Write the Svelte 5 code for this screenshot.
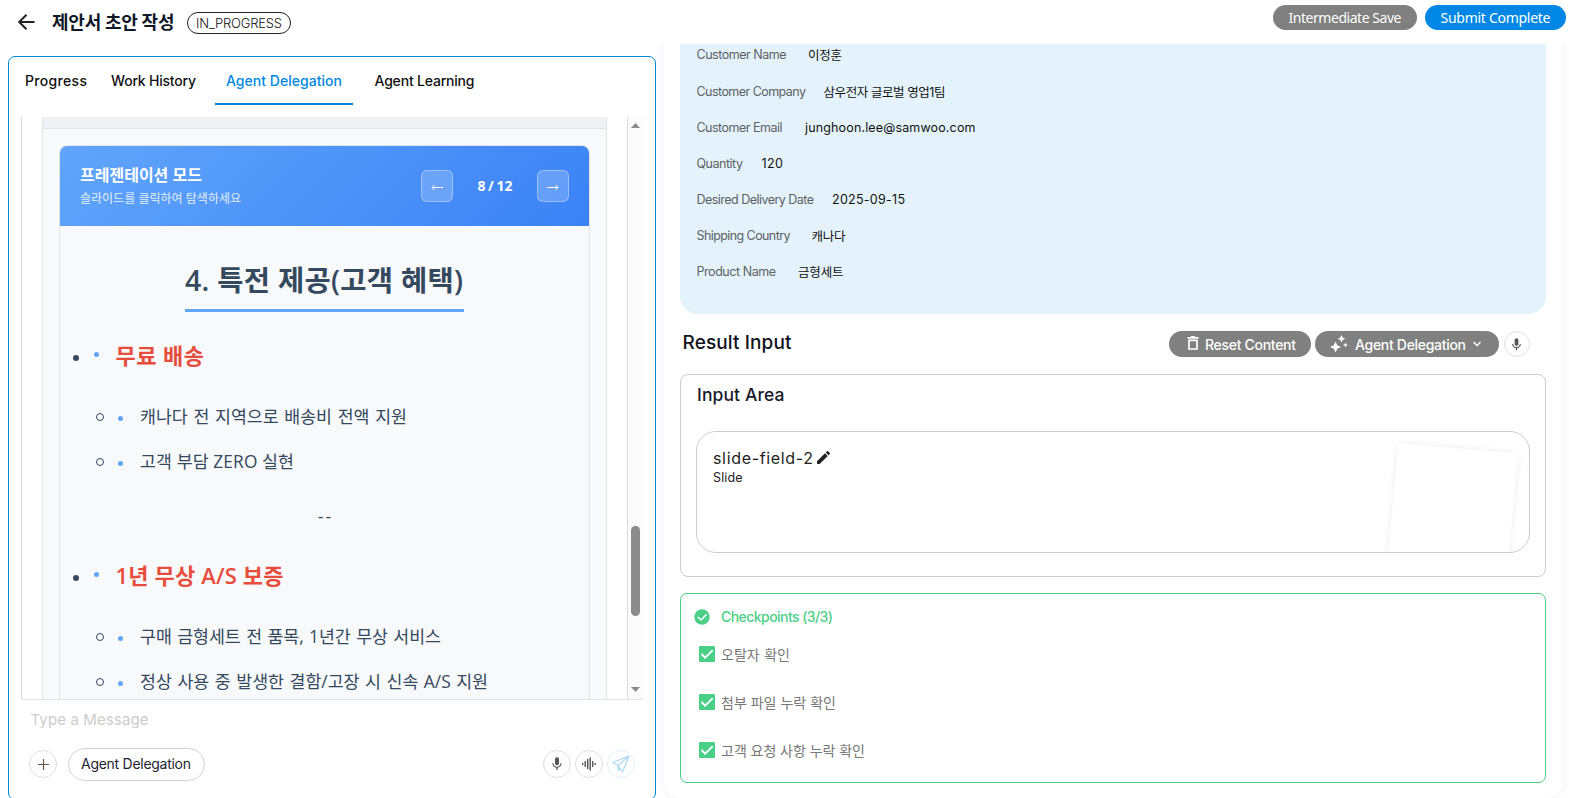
<script>
  const fields = [
    ['Customer Name', 90, 21.5, '이정훈', 34],
    ['Customer Company', 109.5, 17.5, '삼우전자 글로벌 영업1팀', 122],
    ['Customer Email', 86, 22.5, 'junghoon.lee@samwoo.com', 170.5],
    ['Quantity', 46.5, 18.5, '120', 21.5],
    ['Desired Delivery Date', 117.5, 18, '2025-09-15', 73],
    ['Shipping Country', 94, 21, '캐나다', 34],
    ['Product Name', 79.5, 22, '금형세트', 45.5]
  ];
  const tabs = [
    ['Progress', 62],
    ['Work History', 85],
    ['Agent Delegation', 116],
    ['Agent Learning', 100]
  ];
  const checks = [
    ['오탈자 확인', 69],
    ['첨부 파일 누락 확인', 115],
    ['고객 요청 사항 누락 확인', 144]
  ];

  // Spreads a single line of text over a given width, between letters or between words.
  function fit(node, [width, mode]) {
    node.style.whiteSpace = 'nowrap';
    const range = document.createRange();
    range.selectNodeContents(node);
    const natural = range.getBoundingClientRect().width;
    const text = node.textContent.trim();
    if (mode === 'word') {
      node.style.wordSpacing = (width - natural) / (text.split(' ').length - 1) + 'px';
    } else {
      const gap = (width - natural) / (text.length - 1);
      node.style.letterSpacing = gap + 'px';
      node.style.marginRight = -gap + 'px';
    }
  }
</script>

{#snippet mic(size)}
  <svg width={size} height={size} viewBox="0 0 24 24" fill="#555">
    <path d="M12 14c1.7 0 3-1.3 3-3V5c0-1.7-1.300-3-3-3S9 3.300 9 5v6c0 1.700 1.300 3 3 3z" />
    <path d="M17.300 11c0 3-2.500 5.100-5.300 5.100S6.700 14 6.700 11H5c0 3.400 2.700 6.200 6 6.700V21h2v-3.300c3.300-.5 6-3.300 6-6.700h-1.700z" />
  </svg>
{/snippet}

<div class="app">
  <header>
    <svg class="back" width="24" height="24" viewBox="0 0 24 24" fill="none" stroke="#222" stroke-width="2">
      <path d="M20.500 12H5.500M12.500 4.700L5.200 12l7.300 7.300" />
    </svg>
    <h1><span use:fit={[122.500]}>제안서 초안 작성</span></h1>
    <div class="status"><span use:fit={[86]}>IN_PROGRESS</span></div>
    <div class="actions">
      <button class="save"><span use:fit={[113]}>Intermediate Save</span></button>
      <button class="submit"><span use:fit={[110]}>Submit Complete</span></button>
    </div>
  </header>

  <main>
    <section class="chat">
      <nav>
        {#each tabs as [name, w], i}
          <div class="tab" class:active={i === 2}><span use:fit={[w]}>{name}</span></div>
        {/each}
      </nav>

      <div class="scroller">
        <div class="message">
          <div class="deck">
            <div class="strip"></div>
            <div class="slide">
              <div class="slidehead">
                <div>
                  <div class="mode"><span use:fit={[122, 'word']}>프레젠테이션 모드</span></div>
                  <div class="hint"><span use:fit={[161, 'word']}>슬라이드를 클릭하여 탐색하세요</span></div>
                </div>
                <div class="pager">
                  <div class="arrow">
                    <svg width="12" height="7" viewBox="0 0 12 7" fill="none" stroke="#fff"><path d="M12 3.500H1M3.500 1L1 3.500L3.500 6" /></svg>
                  </div>
                  <b><span use:fit={[35, 'word']}>8 / 12</span></b>
                  <div class="arrow">
                    <svg width="12" height="7" viewBox="0 0 12 7" fill="none" stroke="#fff"><path d="M0 3.500H11M8.500 1L11 3.500L8.500 6" /></svg>
                  </div>
                </div>
              </div>
              <h2><span use:fit={[278]}><i>4.</i> 특전 제공<i>(</i>고객 혜택<i>)</i></span></h2>
              <div class="topic"><em></em><u></u><span use:fit={[88.5]}>무료 배송</span></div>
              <div class="item"><em></em><u></u><span use:fit={[267, 'word']}>캐나다 전 지역으로 배송비 전액 지원</span></div>
              <div class="item"><em></em><u></u><span use:fit={[154]}>고객 부담 ZERO 실현</span></div>
              <p><span use:fit={[13.500]}>--</span></p>
              <div class="topic"><em></em><u></u><span use:fit={[168]}><i>1</i>년 무상 <i>A/S</i> 보증</span></div>
              <div class="item"><em></em><u></u><span use:fit={[301, 'word']}>구매 금형세트 전 품목, 1년간 무상 서비스</span></div>
              <div class="item"><em></em><u></u><span use:fit={[348, 'word']}>정상 사용 중 발생한 결함/고장 시 신속 A/S 지원</span></div>
            </div>
          </div>
        </div>
        <div class="bar">
          <svg width="9" height="5" viewBox="0 0 9 5"><path d="M0 5L4.500 0L9 5z" fill="#8b8b8b" /></svg>
          <div class="thumb"></div>
          <svg width="9" height="5" viewBox="0 0 9 5"><path d="M0 0L4.500 5L9 0z" fill="#8b8b8b" /></svg>
        </div>
      </div>

      <div class="placeholder"><span use:fit={[118]}>Type a Message</span></div>
      <div class="tools">
        <div class="round"><svg width="11" height="11" viewBox="0 0 11 11" stroke="#6b5a4c" stroke-width="1.200"><path d="M5.500 0v11M0 5.500h11" /></svg></div>
        <div class="chip"><span use:fit={[110]}>Agent Delegation</span></div>
        <div class="right">
          <div class="round">{@render mic(16)}</div>
          <div class="round">
            <svg width="14" height="14" viewBox="0 0 14 14" fill="none" stroke="#555" stroke-width="1.400"><path d="M.7 6v2M3.200 4v6M5.700 2v10M8.200 .5v13M10.700 4v6M13.200 6v2" /></svg>
          </div>
          <div class="round send">
            <svg width="18" height="18" viewBox="0 0 18 18" fill="none" stroke="#a9d8f5" stroke-width="1.100" stroke-linejoin="round"><path d="M17 1L1 7.500L6 10.500L10.500 17zM17 1L6 10.500V15.500L8 13" /></svg>
          </div>
        </div>
      </div>
    </section>

    <section class="work">
      <div class="info">
        {#each fields as [label, w, gap, value, vw]}
          <div class="field">
            <label style:width="{w + gap}px"><span use:fit={[w]}>{label}</span></label>
            <span use:fit={[vw]}>{value}</span>
          </div>
        {/each}
      </div>

      <div class="resulthead">
        <h3><span use:fit={[109]}>Result Input</span></h3>
        <button class="reset">
          <svg width="12" height="14" viewBox="0 0 12 14" fill="none" stroke="#fff" stroke-width="1.700"><path d="M.5 1.800H11.500M2 4.300h8v8.700H2z" /><path d="M4 .8h4" /></svg>
          <span use:fit={[91]}>Reset Content</span>
        </button>
        <button class="delegate">
          <svg width="18" height="18" viewBox="0 0 18 18" fill="#fff"><path d="M5.500 6.500L7.200 10.300L11 12L7.200 13.700L5.500 17.500L3.800 13.700L0 12L3.800 10.300zM11.500 0L12.700 2.500L15.200 3.700L12.700 4.900L11.500 7.400L10.300 4.900L7.800 3.700L10.300 2.500zM15.500 7.500L16.300 9.200L18 10L16.300 10.800L15.500 12.500L14.700 10.800L13 10L14.700 9.200z" /></svg>
          <span use:fit={[111]}>Agent Delegation</span>
          <svg width="8" height="6" viewBox="0 0 8 6" fill="none" stroke="#fff" stroke-width="1.500"><path d="M.5 1L4 4.500L7.500 1" /></svg>
        </button>
        <div class="voice">{@render mic(15)}</div>
      </div>

      <div class="inputcard">
        <h4><span use:fit={[87.500]}>Input Area</span></h4>
        <div class="slidefield">
          <div class="name">
            <span use:fit={[100]}>slide-field-2</span>
            <svg width="13" height="13" viewBox="3 3 18 18" fill="#222"><path d="M3 17.250V21h3.750L17.800 9.900l-3.700-3.700zM20.700 7c.4-.4.4-1 0-1.400l-2.300-2.300a1 1 0 0 0-1.400 0l-1.800 1.800 3.700 3.700z" /></svg>
          </div>
          <div class="kind"><span use:fit={[29.500]}>Slide</span></div>
          <div class="paper"></div>
        </div>
      </div>

      <div class="checks">
        <div class="checkhead">
          <svg width="16" height="16" viewBox="0 0 16 16" fill="none"><circle cx="8" cy="8" r="7.700" fill="#4bcf87" /><path d="M3.800 8L7 11L12.500 5.400" stroke="#fff" stroke-width="1.500" /></svg>
          <span use:fit={[112]}>Checkpoints (3/3)</span>
        </div>
        {#each checks as [text, w]}
          <div class="check">
            <svg width="16" height="16" viewBox="0 0 16 16" fill="none"><rect width="16" height="16" rx="1" fill="#4bcf87" /><path d="M2.500 8L6.200 11.700L13.700 4.200" stroke="#fff" stroke-width="1.800" /></svg>
            <span use:fit={[w, 'word']}>{text}</span>
          </div>
        {/each}
      </div>
    </section>
  </main>
</div>

<style>
  * { box-sizing: border-box; }
  :global(body) { overflow: hidden; background: #fff; }
  h1, h2, h3, h4, p { margin: 0; }
  svg { flex: none; display: block; }
  span { display: inline-block; white-space: nowrap; }
  button { border: 0; padding: 0; color: #fff; font-family: inherit; display: flex; align-items: center; }
  .app { width: 1569px; height: 798px; overflow: hidden; display: flex; flex-direction: column; font-family: Inter, 'Noto Sans CJK KR', sans-serif; color: #111; }

  header { height: 44px; flex: none; display: flex; align-items: center; padding-left: 14px; }
  h1 { width: 135px; margin-left: 14px; padding-top: 1px; font-size: 18px; line-height: 24px; font-weight: 700; color: #101828; }
  .status { width: 104px; height: 22px; margin-top: 2px; padding-bottom: 1px; border: 1px solid #222; border-radius: 11px; display: flex; align-items: center; justify-content: center; font-size: 13px; font-weight: 300; }
  .actions { margin: -10px 3px 0 auto; display: flex; gap: 8px; font-family: 'Noto Sans', sans-serif; }
  .actions button { height: 25px; border-radius: 13px; justify-content: center; font-size: 14px; }
  .save { width: 144px; background: #808080; }
  .submit { width: 141px; background: #0087e5; }

  main { height: 754px; display: flex; padding-left: 8px; }
  .chat { width: 648px; height: 744px; margin-top: 12px; border: 1px solid #0084d6; border-radius: 7px; display: flex; flex-direction: column; }
  nav { height: 48px; padding: 0 5px; display: flex; flex: none; }
  .tab { padding: 0 11px; height: 48px; line-height: 48px; font-size: 14px; font-weight: 450; color: #111; margin-right: 2px; }
  .tab + .tab { padding: 0 10.500px 0 11px; margin-right: 11px; }
  .tab:nth-child(2) { margin-right: 8.500px; }
  .active { color: #0087e0; border-bottom: 2px solid #0084dd; }

  .scroller { height: 583px; flex: none; margin: 12px 12px 0 12px; border-bottom: 1px solid #dfe3e8; display: flex; overflow: hidden; }
  .message { width: 607px; border: 1px solid #d6dbe6; border-width: 0 1px; padding-left: 20px; }
  .deck { width: 565px; height: 582px; border: 1px solid #e0e3e7; border-width: 0 1px; background: #f8fafc; }
  .strip { height: 12px; background: #f0f1f5; border-bottom: 1px solid #e0e3e7; }
  .slide { width: 531px; height: 700px; margin: 16px 0 0 16px; border: 1px solid #e1e5e9; border-radius: 8px; overflow: hidden; background: #f8f9fb; color: #34495e; font-family: 'Open Sans', 'Noto Sans CJK KR', sans-serif; }
  .slidehead { height: 80px; padding: 0 20px; display: flex; align-items: center; justify-content: space-between; color: #fff; background: linear-gradient(135deg, #60a5fa, #3b82f6); }
  .mode { font-size: 16px; font-weight: 700; line-height: 24px; height: 26px; padding-top: 1px; }
  .hint { font-size: 12px; font-weight: 500; line-height: 22px; height: 22px; color: rgba(255, 255, 255, .72); }
  .pager { width: 148px; display: flex; align-items: center; justify-content: space-between; font-size: 14px; }
  .pager b { margin-top: -1px; }
  .arrow { width: 32px; height: 32px; border: 1px solid rgba(255, 255, 255, .35); border-radius: 6px; background: rgba(255, 255, 255, .2); display: flex; align-items: center; justify-content: center; padding-top: 3px; }
  h2 { width: 279px; height: 58px; margin: 28px auto 0; line-height: 52px; border-bottom: 3px solid #60a5fa; font-size: 28.500px; font-weight: 700; }
  i { font-style: normal; font-weight: 600; }
  .topic { display: flex; align-items: center; height: 45px; margin-top: 22px; padding-left: 13px; font-size: 22px; font-weight: 700; color: #e74c3c; }
  .topic em { width: 6px; height: 6px; border-radius: 50%; background: #34495e; margin-top: 3px; }
  .topic u { width: 5px; height: 5px; border-radius: 50%; background: #60a5fa; margin: -5px 17px 0 14.500px; }
  .topic span { margin-top: -5px; }
  .topic + .item { margin-top: 14px; }
  .item { display: flex; align-items: center; height: 45px; padding-left: 36px; font-size: 17.300px; }
  .item em { width: 8px; height: 8px; border-radius: 50%; border: 1px solid #34495e; margin-top: 2px; }
  .item u { width: 5px; height: 5px; border-radius: 50%; background: #60a5fa; margin: 5px 17.500px 0 13.500px; }
  .item span { margin-top: -1px; }
  p { height: 45px; line-height: 45px; margin: 11px 0 16px; text-align: center; font-size: 17.600px; }
  p + .topic { margin-top: -1px; }

  .bar { width: 15px; background: #fbfbfb; display: flex; flex-direction: column; align-items: center; justify-content: space-between; padding: 6px 0 7px; }
  .thumb { width: 9px; height: 90px; border-radius: 5px; background: #8b8b8b; margin-top: 326px; }

  .placeholder { height: 40px; flex: none; padding-left: 21.500px; line-height: 39px; font-size: 15px; color: #ccc; }
  .tools { height: 49px; margin-top: -.5px; display: flex; align-items: center; padding-left: 20px; }
  .round { width: 28px; height: 28px; border: 1px solid #ddd; border-radius: 50%; display: flex; align-items: center; justify-content: center; }
  .send { border-color: #e3f2fc; }
  .chip { width: 137px; height: 33px; margin-left: 11px; border: 1px solid #d0d2dc; border-radius: 17px; font-size: 14px; line-height: 29px; padding-left: 12px; color: #1d2330; font-weight: 400; }
  .right { margin-left: auto; margin-right: 20px; display: flex; gap: 4px; }

  .work { width: 898px; height: 754px; margin-left: 8px; padding: 0 16px; border-radius: 0 0 16px 16px; box-shadow: 0 0 8px 1px rgba(80, 80, 200, .07); clip-path: inset(0 -7px -7px -7px); }
  .info { height: 270px; padding: 1px 16.500px 0; border-radius: 0 0 18px 18px; background: #e4f3fb; font-size: 12.500px; }
  .field { height: 36.100px; display: flex; align-items: center; color: #111; }
  .field:first-child { height: 28px; padding-bottom: 10px; }
  label { color: #5c6166; flex: none; }
  .resulthead { height: 60px; display: flex; align-items: center; }
  h3 { font-size: 19px; font-weight: 550; line-height: 24px; width: 489px; padding-left: 2.500px; margin-top: -3px; color: #10131c; }
  .resulthead button { height: 26px; background: #808080; border-radius: 13px; font-size: 14px; font-weight: 500; }
  .reset { width: 142px; padding-left: 18px; gap: 6px; }
  .reset svg { margin-top: -2px; }
  .delegate { width: 184px; margin-left: 4px; padding-left: 15px; gap: 7px; }
  .voice { width: 26px; height: 26px; border: 1px solid #e2e2e2; border-radius: 50%; margin-left: 4.500px; display: flex; align-items: center; justify-content: center; }
  .inputcard { height: 203px; border: 1px solid #ccc; border-radius: 8px; padding: 0 15px; }
  h4 { height: 56px; padding-left: 1px; line-height: 40px; font-size: 17.500px; font-weight: 550; color: #171b2b; }
  .slidefield { height: 122px; border: 1px solid #ccc; border-radius: 20px; padding: 15px 16px; position: relative; overflow: hidden; }
  .name { display: flex; align-items: center; gap: 4px; height: 22px; padding-bottom: 1px; font-size: 16px; color: #222; }
  .kind { font-size: 12.500px; line-height: 18px; color: #222; }
  .paper { position: absolute; left: 694px; top: 16px; width: 120px; height: 160px; background: #fff; border-radius: 4px; transform: rotate(5deg); box-shadow: 0 0 8px rgba(0, 0, 0, .07); }
  .checks { height: 190px; margin-top: 16px; border: 1px solid #4bcf87; border-radius: 7px; }
  .checkhead { height: 46px; padding-left: 13px; display: flex; align-items: center; gap: 11px; font-size: 14px; font-weight: 500; color: #4bcf87; }
  .checkhead span { margin-top: -2px; }
  .check { height: 48px; display: flex; align-items: center; padding: 0 0 20px 18px; gap: 6px; font-size: 14px; color: #777; }
</style>
